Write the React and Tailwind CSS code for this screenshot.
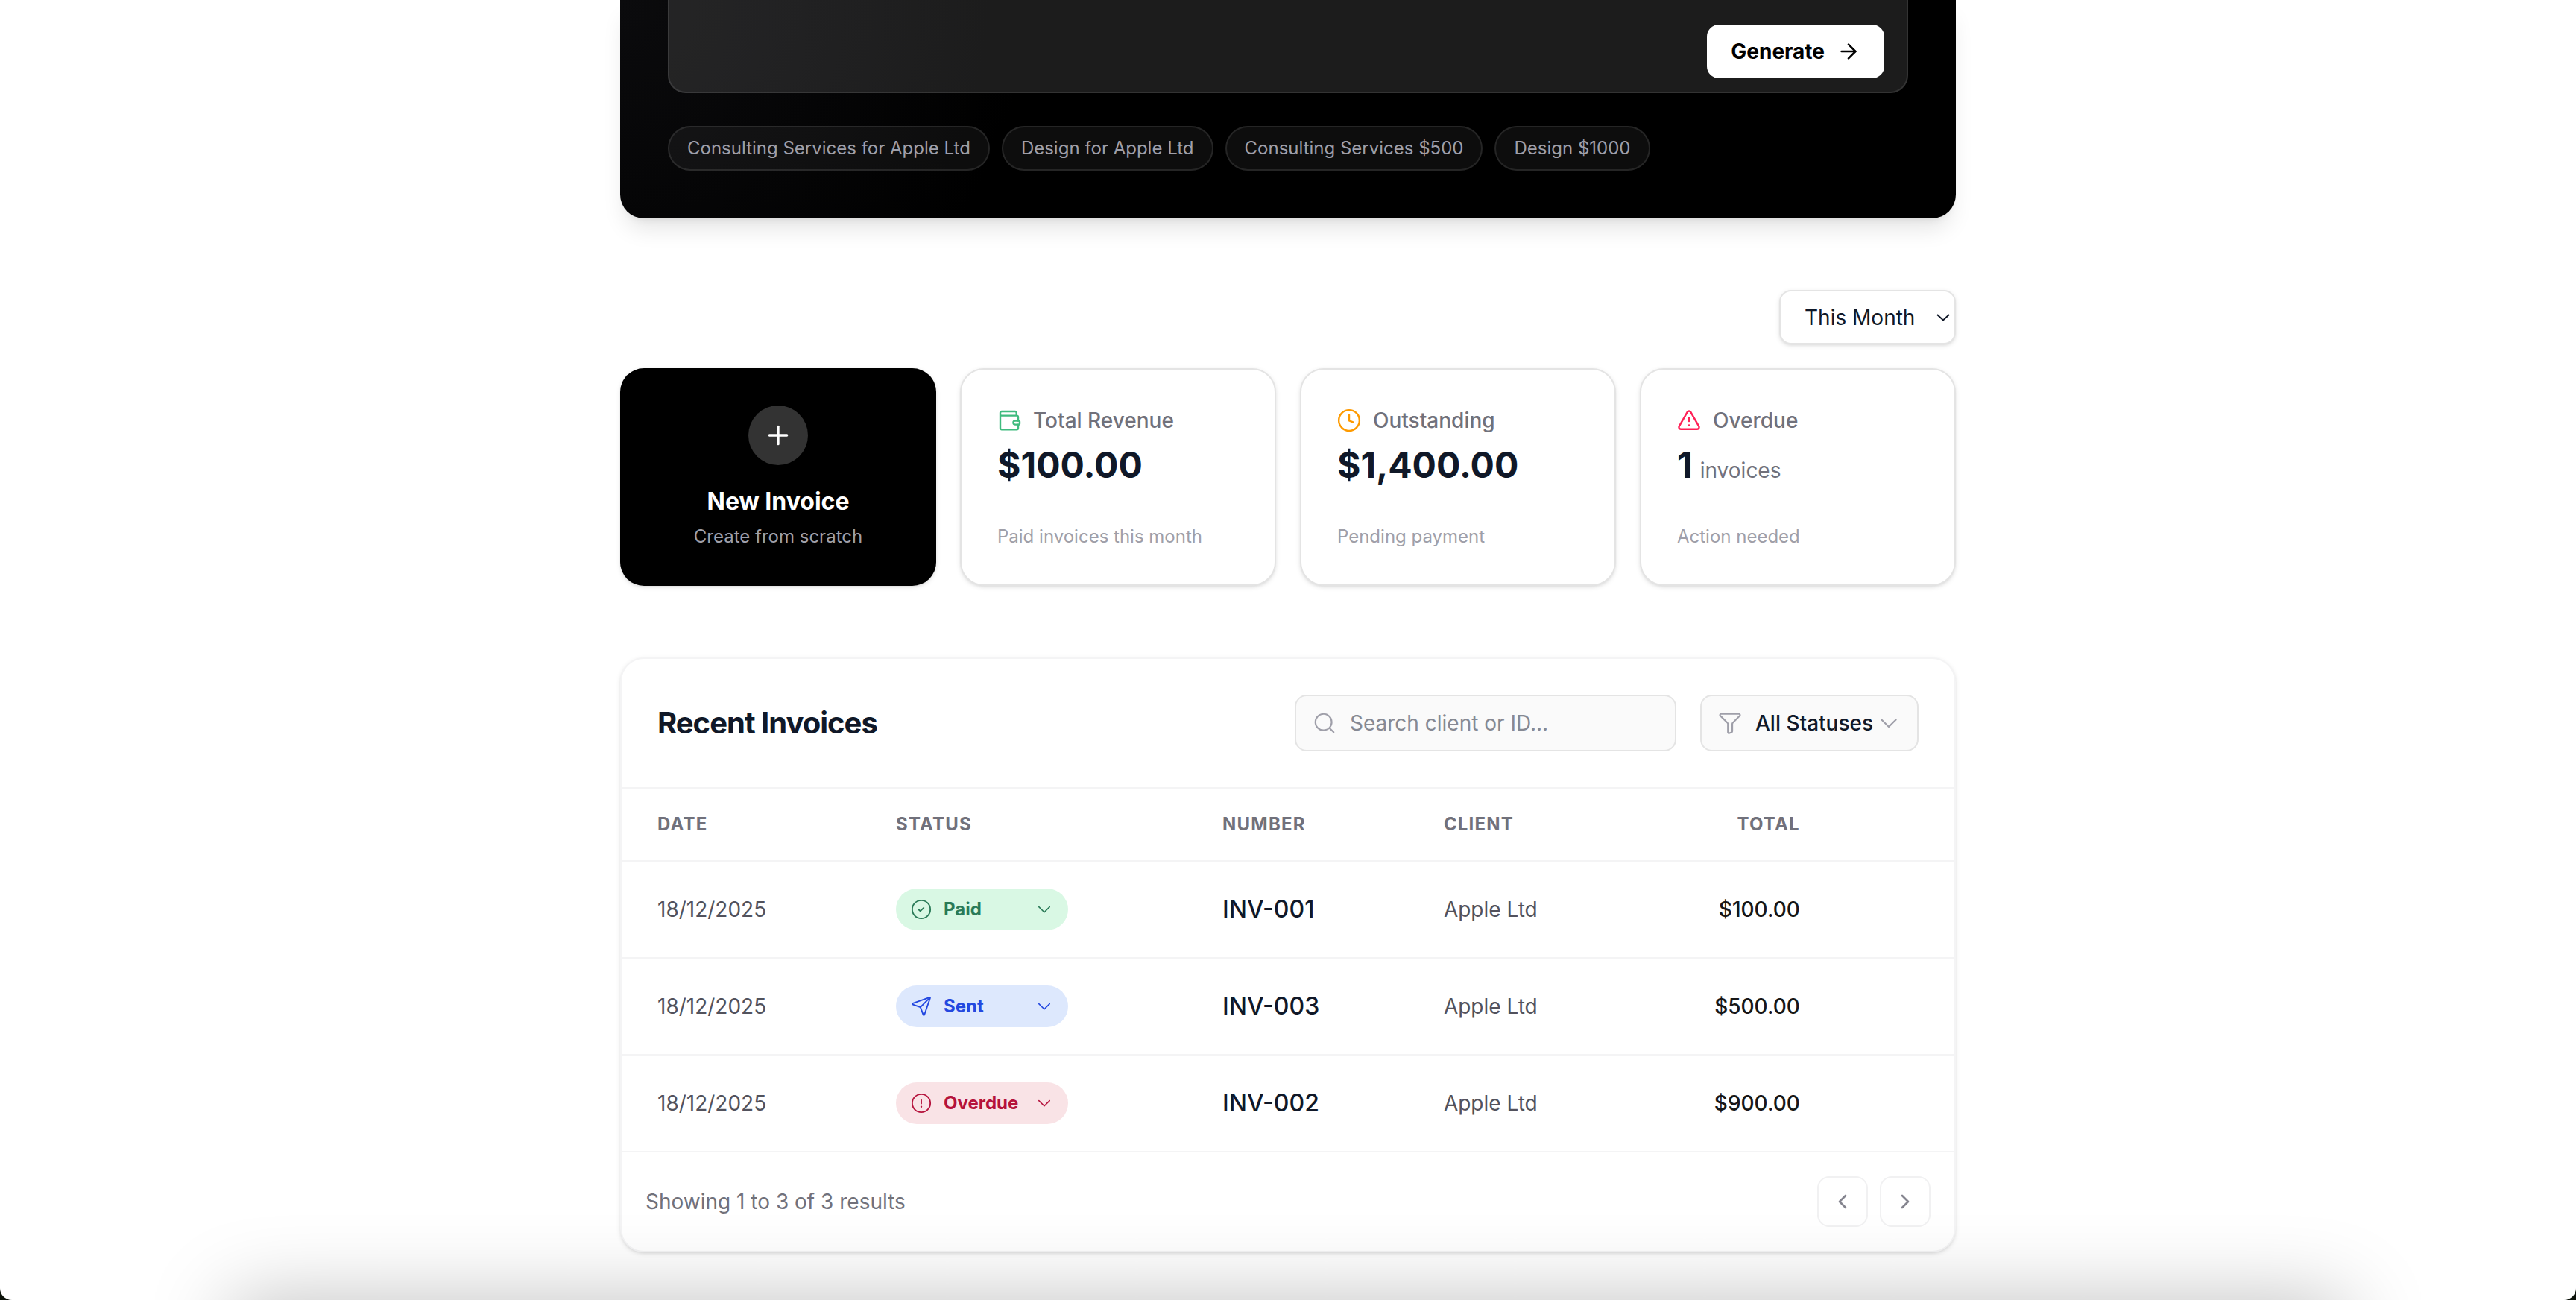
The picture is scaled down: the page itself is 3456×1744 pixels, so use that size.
import { ArrowRight, ChevronLeft, ChevronRight, Plus } from "lucide-react";

const prompts = [
  "Consulting Services for Apple Ltd",
  "Design for Apple Ltd",
  "Consulting Services $500",
  "Design $1000",
];

const cardShadow =
  "shadow-[0_2px_6px_0_rgba(0,0,0,0.1),0_2px_4px_-2px_rgba(0,0,0,0.1)]";

function Icon({ className, children, weight = "1.6" }) {
  return (
    <svg
      viewBox="0 0 24 24"
      fill="none"
      stroke="currentColor"
      strokeWidth={weight}
      strokeLinecap="round"
      strokeLinejoin="round"
      aria-hidden="true"
      className={className}
    >
      {children}
    </svg>
  );
}

function WalletIcon({ className }) {
  return (
    <Icon className={className} weight="1.8">
      <path d="M21 12.4V8.4a1.2 1.2 0 0 0-1.2-1.2H4.2A1.2 1.2 0 0 1 3 6V4.4A1.4 1.4 0 0 1 4.4 3h13.5a1.4 1.4 0 0 1 1.4 1.4v2.8M3 4.6v15.2a1.4 1.4 0 0 0 1.4 1.4h15.2a1.4 1.4 0 0 0 1.4-1.4v-3.6" />
      <path d="M18 12.4h3.7a.8.8 0 0 1 .8.8v2.2a.8.8 0 0 1-.8.8H18a1.9 1.9 0 0 1 0-3.8z" />
    </Icon>
  );
}

function ClockIcon({ className }) {
  return (
    <Icon className={className} weight="1.8">
      <circle cx="12" cy="12" r="10.4" />
      <path d="M12 6.4v5.8l3.9 1.6" />
    </Icon>
  );
}

function WarningIcon({ className }) {
  return (
    <Icon className={className} weight="1.8">
      <path d="M10.4 3.5a1.9 1.9 0 0 1 3.2 0l8.3 14.4a1.9 1.9 0 0 1-1.6 2.9H3.7a1.9 1.9 0 0 1-1.6-2.9z" />
      <path d="M12 9.2v3.6" />
      <circle cx="12" cy="17" r="1" fill="currentColor" stroke="none" />
    </Icon>
  );
}

function SearchIcon({ className }) {
  return (
    <Icon className={className}>
      <circle cx="11" cy="11" r="8.2" />
      <path d="M21.2 21.2 17 17" />
    </Icon>
  );
}

function FunnelIcon({ className }) {
  return (
    <Icon className={className}>
      <path d="M3 2.8h18c1 0 1.5 1.1.8 1.8l-7.1 7.2c-.3.3-.4.6-.4 1v7.4c0 .5-.3.9-.7 1.1l-2.2.9c-.7.3-1.5-.2-1.5-1v-8.4c0-.4-.2-.7-.4-1L2.2 4.6c-.7-.7-.2-1.8.8-1.8z" />
    </Icon>
  );
}

function ChevronDownIcon({ className }) {
  return (
    <Icon className={className}>
      <path d="m4.8 8.6 7.2 7.2 7.2-7.2" />
    </Icon>
  );
}

function PaidIcon({ className }) {
  return (
    <Icon className={className}>
      <circle cx="12" cy="12" r="10.4" />
      <path d="m9 12.2 1.9 1.7 3.9-3.7" />
    </Icon>
  );
}

function SentIcon({ className }) {
  return (
    <Icon className={className}>
      <path d="M21.2 1.9 2.5 8.4c-.7.3-.7 1.2 0 1.5L11 13l3.2 8.6c.3.7 1.1.7 1.4 0L22.1 2.8c.2-.6-.3-1.1-.9-.9z" />
      <path d="M21.9 2.1 11 13" />
    </Icon>
  );
}

function OverdueIcon({ className }) {
  return (
    <Icon className={className}>
      <circle cx="12" cy="12" r="10.4" />
      <path d="M12 8.2v4.2" />
      <circle cx="12" cy="16.1" r="1" fill="currentColor" stroke="none" />
    </Icon>
  );
}

const stats = [
  {
    label: "Total Revenue",
    value: "$100.00",
    note: "Paid invoices this month",
    StatIcon: WalletIcon,
    tone: "text-[#3fbb7e]",
  },
  {
    label: "Outstanding",
    value: "$1,400.00",
    note: "Pending payment",
    StatIcon: ClockIcon,
    tone: "text-amber-500",
  },
  {
    label: "Overdue",
    value: "1",
    unit: "invoices",
    note: "Action needed",
    StatIcon: WarningIcon,
    tone: "text-rose-500",
  },
];

const statuses = {
  Paid: { StatusIcon: PaidIcon, tone: "bg-[#d9f8e4] text-[#2a7a57]" },
  Sent: { StatusIcon: SentIcon, tone: "bg-[#dde8fd] text-[#2348e0]" },
  Overdue: { StatusIcon: OverdueIcon, tone: "bg-[#f9e3e6] text-[#b5123c]" },
};

const invoices = [
  { date: "18/12/2025", status: "Paid", number: "INV-001", client: "Apple Ltd", total: "$100.00" },
  { date: "18/12/2025", status: "Sent", number: "INV-003", client: "Apple Ltd", total: "$500.00" },
  { date: "18/12/2025", status: "Overdue", number: "INV-002", client: "Apple Ltd", total: "$900.00" },
];

function PromptPanel() {
  return (
    <section className="rounded-b-[32px] bg-black bg-[radial-gradient(circle_at_0%_0%,#0b0b0d,#000_30%)] px-16 pb-16 shadow-[0_20px_30px_-6px_rgba(0,0,0,0.1),0_8px_12px_-8px_rgba(0,0,0,0.1)]">
      <form className="flex items-end rounded-b-3xl border-2 border-t-0 border-white/10 bg-white/11 pr-[30px] pb-[18px]">
        <textarea
          aria-label="Describe your invoice"
          className="h-[105px] flex-1 resize-none bg-transparent px-8 text-[28px] text-white outline-none"
        />
        <button
          type="button"
          className="flex h-[72px] items-center gap-4 rounded-2xl bg-white px-8 text-[28px] leading-10 font-bold text-black"
        >
          Generate
          <ArrowRight className="size-8" />
        </button>
      </form>
      <div className="mt-11 flex flex-wrap gap-4">
        {prompts.map((prompt) => (
          <button
            key={prompt}
            type="button"
            className="rounded-full border-2 border-white/10 bg-white/5 px-6 py-3 text-2xl leading-8 text-zinc-400"
          >
            {prompt}
          </button>
        ))}
      </div>
    </section>
  );
}

function PeriodFilter() {
  return (
    <div className="mt-24 flex justify-end">
      <div className="relative">
        <select
          aria-label="Period"
          className={`block h-[73px] w-[237px] appearance-none rounded-2xl border-2 border-[#e4e4e4] bg-white pl-8 text-[28px] leading-10 text-gray-900 ${cardShadow}`}
        >
          <option>This Month</option>
        </select>
        <svg
          viewBox="0 0 18 10"
          fill="none"
          stroke="currentColor"
          strokeWidth="2"
          aria-hidden="true"
          className="pointer-events-none absolute top-8 right-2 h-2.5 w-[18px] text-gray-900"
        >
          <path d="m1 1 8 7.5L17 1" />
        </svg>
      </div>
    </div>
  );
}

function StatCards() {
  return (
    <section className="mt-8 grid grid-cols-4 gap-8">
      <button
        type="button"
        className={`flex flex-col items-center rounded-[32px] bg-black p-[50px] ${cardShadow}`}
      >
        <span className="flex size-20 items-center justify-center rounded-full bg-white/20 text-white">
          <Plus className="size-10" />
        </span>
        <span className="mt-6 text-[32px] leading-[50px] font-bold text-white">New Invoice</span>
        <span className="mt-1.5 text-2xl leading-8 text-zinc-400">Create from scratch</span>
      </button>
      {stats.map(({ label, value, unit, note, StatIcon, tone }) => (
        <div
          key={label}
          className={`flex flex-col rounded-[32px] border-2 border-[#e4e4e4] bg-white p-12 ${cardShadow}`}
        >
          <div className="flex items-center gap-4">
            <StatIcon className={`size-8 ${tone}`} />
            <h3 className="text-[28px] leading-10 font-medium text-zinc-500">{label}</h3>
          </div>
          <p className="mt-2 text-5xl leading-16 font-bold text-gray-900">
            {value}
            {unit && <span className="ml-2.5 text-[28px] font-normal text-zinc-500">{unit}</span>}
          </p>
          <p className="mt-auto text-2xl leading-8 text-zinc-400">{note}</p>
        </div>
      ))}
    </section>
  );
}

function StatusSelect({ status, number }) {
  const { StatusIcon, tone } = statuses[status];
  return (
    <div className={`flex h-14 w-[231px] items-center rounded-full px-5 ${tone}`}>
      <StatusIcon className="size-7 shrink-0" />
      <select
        aria-label={`Status of ${number}`}
        defaultValue={status}
        className="ml-4 min-w-0 flex-1 appearance-none bg-transparent text-2xl leading-8 font-bold"
      >
        {Object.keys(statuses).map((name) => (
          <option key={name}>{name}</option>
        ))}
      </select>
      <ChevronDownIcon className="size-6 shrink-0" />
    </div>
  );
}

function InvoiceTable() {
  return (
    <section className={`mt-24 rounded-[32px] border-2 border-zinc-100 bg-white ${cardShadow}`}>
      <div className="flex items-center justify-between border-b-2 border-zinc-100 p-12">
        <h2 className="text-[40px] leading-14 font-bold tracking-tight text-gray-900">Recent Invoices</h2>
        <div className="flex gap-8">
          <div className="relative">
            <SearchIcon className="absolute top-[22px] left-6 size-8 text-zinc-400" />
            <input
              type="search"
              aria-label="Search invoices"
              placeholder="Search client or ID..."
              className="block h-[76px] w-[512px] rounded-2xl border-2 border-[#e4e4e4] bg-neutral-50 pr-8 pl-[72px] text-[28px] leading-10 placeholder:text-[#868993]"
            />
          </div>
          <div className="relative">
            <FunnelIcon className="absolute top-[22px] left-6 size-8 text-zinc-400" />
            <select
              aria-label="Status"
              className="block h-[76px] w-[293px] appearance-none rounded-2xl border-2 border-[#e4e4e4] bg-neutral-50 pl-[72px] text-[28px] leading-10 font-medium text-gray-900"
            >
              <option>All Statuses</option>
            </select>
            <ChevronDownIcon className="pointer-events-none absolute top-[22px] right-6 size-8 text-zinc-400" />
          </div>
        </div>
      </div>

      <table className="w-full table-fixed border-separate border-spacing-0 text-left text-[28px] leading-10 text-zinc-600">
        <thead>
          <tr className="text-2xl leading-8 tracking-wider text-zinc-500 uppercase *:h-[98px] *:border-b-2 *:border-zinc-100">
            <th className="w-[17.9%] px-12 font-bold">Date</th>
            <th className="w-[24.5%] px-12 font-bold">Status</th>
            <th className="w-[16.6%] px-12 font-bold">Number</th>
            <th className="w-[16.6%] px-12 font-bold">Client</th>
            <th className="w-[15.5%] px-12 text-right font-bold">Total</th>
            <th className="w-[8.9%]" aria-label="Actions" />
          </tr>
        </thead>
        <tbody>
          {invoices.map(({ date, status, number, client, total }) => (
            <tr key={number} className="*:h-[130px] *:border-b-2 *:border-zinc-100">
              <td className="px-12">{date}</td>
              <td className="px-12">
                <StatusSelect status={status} number={number} />
              </td>
              <td className="px-12 text-[32px] font-medium text-gray-900">{number}</td>
              <td className="px-12">{client}</td>
              <td className="px-12 text-right font-medium text-neutral-900">{total}</td>
              <td />
            </tr>
          ))}
        </tbody>
      </table>

      <div className="flex items-center justify-between p-8">
        <p className="text-[28px] leading-10 text-zinc-500">Showing 1 to 3 of 3 results</p>
        <div className="flex gap-4 text-[#85858f]">
          <button
            type="button"
            aria-label="Previous page"
            className="flex size-[68px] items-center justify-center rounded-2xl border-2 border-[#f1f1f2]"
          >
            <ChevronLeft className="size-8" />
          </button>
          <button
            type="button"
            aria-label="Next page"
            className="flex size-[68px] items-center justify-center rounded-2xl border-2 border-[#f1f1f2]"
          >
            <ChevronRight className="size-8" />
          </button>
        </div>
      </div>
    </section>
  );
}

export default function App() {
  return (
    <div className="bg-[#0c120a] font-['Inter',sans-serif] antialiased">
      <div className="relative min-h-screen overflow-hidden rounded-b-2xl bg-white pb-16">
        <main className="mx-auto max-w-[1792px]">
          <PromptPanel />
          <PeriodFilter />
          <StatCards />
          <InvoiceTable />
        </main>
        <div className="pointer-events-none absolute inset-x-[310px] top-full h-40 shadow-[0_0_110px_0_rgba(0,0,0,0.25)]" />
      </div>
    </div>
  );
}
